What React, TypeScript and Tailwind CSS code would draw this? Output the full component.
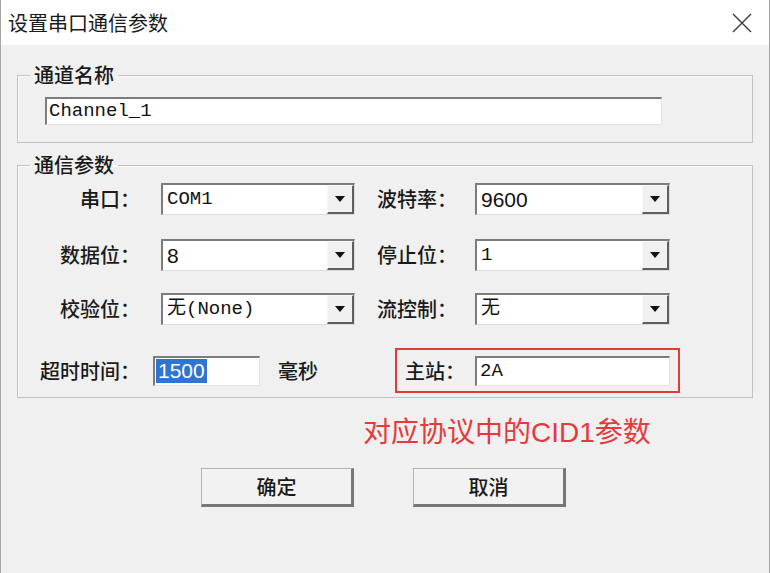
import React from "react";

const cjk = "font-['Noto_Sans_CJK_SC',sans-serif]";
const mono = "font-['Liberation_Mono','Noto_Sans_CJK_SC',monospace]";
const sans = "font-['Liberation_Sans','Noto_Sans_CJK_SC',sans-serif]";

type SelectProps = {
  value: string;
  width: string;
  margin: string;
  sansValue?: boolean;
};

const ComboBox = ({ value, width, margin, sansValue }: SelectProps) => {
  return (
    <div
      className={`${width} ${margin} h-[32px] flex bg-white border-t-2 border-l-2 border-[#7c7c7c] border-r border-b border-r-[#dcdcdc] border-b-[#dcdcdc]`}
    >
      <div
        className={`flex-1 flex items-center pl-[4px] text-[#111] ${
          sansValue ? `${sans} text-[21px]` : `${mono} text-[19px]`
        }`}
      >
        {value}
      </div>
      <div className="w-[27px] h-full flex items-center justify-center bg-[#f0f0f0] border-t border-l border-[#f8f8f8] border-r-2 border-b-2 border-r-[#5e5e5e] border-b-[#5e5e5e]">
        <svg width="10" height="6" viewBox="0 0 10 6">
          <path d="M0 0 L10 0 L5 6 Z" fill="#111" />
        </svg>
      </div>
    </div>
  );
};

const Row = ({ children, mt }: { children: React.ReactNode; mt: string }) => (
  <div className={`flex items-center ${mt}`}>{children}</div>
);

const Label = ({ text, width }: { text: string; width: string }) => (
  <span className={`${width} text-right text-[20px] leading-[24px] font-medium text-[#1a1a1a]`}>{text}</span>
);

const DialogButton = ({ text }: { text: string }) => (
  <button className="w-[153px] h-[39px] bg-[#f2f2f2] border-t border-l border-[#b4b4b4] border-r-[3px] border-b-[3px] border-r-[#777] border-b-[#777] text-[20px] font-medium text-[#1a1a1a] flex items-center justify-center">
    {text}
  </button>
);

export default function App() {
  return (
    <div
      className={`w-[770px] h-[573px] bg-[#f0f0f0] border-x border-[#a6a6a6] flex flex-col overflow-hidden ${cjk}`}
    >
      <div className="h-[45px] shrink-0 bg-white flex items-center justify-between pl-[7px] pr-[17px]">
        <span className="text-[20px] text-[#1a1a1a]">设置串口通信参数</span>
        <svg width="20" height="20" viewBox="0 0 20 20">
          <path d="M1 1 L19 19 M19 1 L1 19" stroke="#3a3a3a" strokeWidth="1.4" />
        </svg>
      </div>

      <div className="px-[16px] flex flex-col">
        <fieldset className="mt-5 border border-[#c2c2c2] shadow-[inset_1px_1px_0_#fbfbfb] pb-[17px]">
          <legend className="ml-[12px] px-[4px] text-[20px] leading-[20px] font-medium text-[#1a1a1a]">通道名称</legend>
          <div
            className={`ml-[27px] mt-[12px] w-[617px] h-[28px] bg-white border-t-2 border-l-2 border-[#7c7c7c] border-r border-b border-r-[#e4e4e4] border-b-[#e4e4e4] flex items-center pl-[2px] text-[19px] text-[#111] ${mono}`}
          >
            Channel_1
          </div>
        </fieldset>

        <fieldset className="mt-3 border border-[#c2c2c2] shadow-[inset_1px_1px_0_#fbfbfb] pb-[4px]">
          <legend className="ml-[12px] px-[4px] text-[20px] leading-[20px] font-medium text-[#1a1a1a]">通信参数</legend>

          <Row mt="mt-[8px]">
            <Label text="串口：" width="w-[122px]" />
            <ComboBox value="COM1" width="w-[194px]" margin="ml-[21px]" />
            <Label text="波特率：" width="w-[102px]" />
            <ComboBox value="9600" width="w-[195px]" margin="ml-[18px]" sansValue />
          </Row>

          <Row mt="mt-[24px]">
            <Label text="数据位：" width="w-[122px]" />
            <ComboBox value="8" width="w-[194px]" margin="ml-[21px]" sansValue />
            <Label text="停止位：" width="w-[102px]" />
            <ComboBox value="1" width="w-[195px]" margin="ml-[18px]" />
          </Row>

          <Row mt="mt-[22px]">
            <Label text="校验位：" width="w-[122px]" />
            <ComboBox value="无(None)" width="w-[194px]" margin="ml-[21px]" />
            <Label text="流控制：" width="w-[102px]" />
            <ComboBox value="无" width="w-[195px]" margin="ml-[18px]" />
          </Row>

          <Row mt="mt-[23px]">
            <Label text="超时时间：" width="w-[122px]" />
            <div className="ml-[13px] w-[107px] h-[30px] bg-white border-t-2 border-l-2 border-[#7c7c7c] border-r border-b border-r-[#e4e4e4] border-b-[#e4e4e4] flex items-center pl-[1px]">
              <span className={`bg-[#2f74d0] text-white text-[21px] leading-[24px] px-[2px] ${sans}`}>1500</span>
            </div>
            <span className="ml-[18px] text-[20px] font-medium text-[#1a1a1a]">毫秒</span>
            <div className="ml-[77px] w-[285px] h-[45px] border-2 border-[#e2393b] flex items-center pl-[8px]">
              <span className="text-[20px] leading-[24px] font-medium text-[#1a1a1a]">主站：</span>
              <div
                className={`ml-[10px] w-[195px] h-[30px] bg-white border-t-2 border-l-2 border-[#7c7c7c] border-r border-b border-r-[#e4e4e4] border-b-[#e4e4e4] flex items-center pl-[3px] text-[19px] text-[#111] ${mono}`}
              >
                2A
              </div>
            </div>
          </Row>
        </fieldset>

        <div className="ml-[346px] mt-[16px] text-[28px] leading-[32px] text-[#e8383b]">
          对应协议中的<span className={sans}>CID1</span>参数
        </div>

        <div className="ml-[184px] mt-[19px] flex gap-[59px]">
          <DialogButton text="确定" />
          <DialogButton text="取消" />
        </div>
      </div>
    </div>
  );
}
